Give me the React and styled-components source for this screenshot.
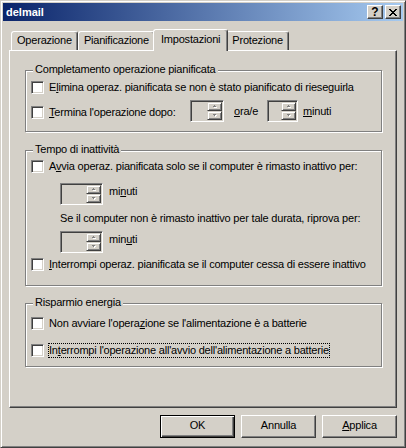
import React from "react";
import styled, { createGlobalStyle, css } from "styled-components";

const GlobalStyle = createGlobalStyle`
  html, body {
    margin: 0;
    padding: 0;
    background: #d4d0c8;
  }
  body {
    font-family: "Liberation Sans", Arial, sans-serif;
    font-size: 11px;
    line-height: 13px;
    letter-spacing: -0.2px;
    color: #000;
  }
  * {
    box-sizing: border-box;
  }
`;

const Window = styled.div`
  width: 406px;
  height: 448px;
  display: flex;
  flex-direction: column;
  padding: 2px;
  background: #d4d0c8;
  border: 1px solid;
  border-color: #d4d0c8 #404040 #404040 #d4d0c8;
  box-shadow: inset 1px 1px #fff, inset -1px -1px #808080;
`;

const TitleBar = styled.div`
  flex: none;
  height: 18px;
  display: flex;
  align-items: center;
  padding: 0 2px 0 3px;
  background: linear-gradient(to right, #0a246a, #a6caf0);
`;

const Title = styled.span`
  flex: 1;
  color: #fff;
  font-weight: bold;
  letter-spacing: 0;
`;

const CaptionButtons = styled.div`
  display: flex;
  gap: 2px;
`;

const CaptionButton = styled.div`
  width: 16px;
  height: 14px;
  display: flex;
  align-items: center;
  justify-content: center;
  background: #d4d0c8;
  border: 1px solid;
  border-color: #fff #404040 #404040 #fff;
  box-shadow: inset -1px -1px #808080;
  font-weight: bold;
  font-size: 12px;
  letter-spacing: 0;
  line-height: 12px;
`;

const Body = styled.div`
  flex: 1;
  display: flex;
  flex-direction: column;
  padding: 8px 6px 0;
`;

const TabStrip = styled.div`
  flex: none;
  height: 21px;
  display: flex;
  align-items: flex-end;
  padding-left: 2px;
  position: relative;
  z-index: 1;
`;

const Tab = styled.div`
  position: relative;
  height: 19px;
  padding: 2px 5px 0;
  background: #d4d0c8;
  border: 1px solid;
  border-bottom: none;
  border-color: #fff #404040 transparent #fff;
  border-radius: 3px 3px 0 0;
  box-shadow: inset -1px 0 #808080;
  white-space: nowrap;
  z-index: 1;

  ${({ $active }) => $active && css`
    height: 22px;
    margin: 0 -2px -1px;
    padding: 3px 7px 0;
    z-index: 2;
  `}
`;

const Panel = styled.div`
  flex: none;
  height: 358px;
  display: flex;
  flex-direction: column;
  padding: 19px 14px 0 15px;
  border: 1px solid;
  border-color: #fff #404040 #404040 #fff;
  box-shadow: inset -1px -1px #808080;
`;

const GroupBox = styled.div`
  position: relative;
  display: flex;
  flex-direction: column;
  margin-top: ${({ $mt }) => $mt || 0}px;
  padding: ${({ $pad }) => $pad};
  border: 1px solid #808080;
  box-shadow: 1px 1px 0 #fff, inset 1px 1px 0 #fff;
`;

const Legend = styled.span`
  position: absolute;
  top: -8px;
  left: 7px;
  padding: 0 2px;
  background: #d4d0c8;
  white-space: nowrap;
`;

const Row = styled.div`
  display: flex;
  align-items: ${({ $align }) => $align || "center"};
  margin-top: ${({ $mt }) => $mt || 0}px;
  padding-left: ${({ $indent }) => $indent || 0}px;
`;

const CheckOption = styled.div`
  flex: none;
  display: flex;
  align-items: center;
  gap: 4px;
  width: ${({ $w }) => ($w ? `${$w}px` : "auto")};
  margin-top: ${({ $mt }) => $mt || 0}px;
`;

const Check = styled.span`
  flex: none;
  width: 13px;
  height: 13px;
  background: #fff;
  border: 1px solid;
  border-color: #808080 #fff #fff #808080;
  box-shadow: inset 1px 1px #404040, inset -1px -1px #d4d0c8;
`;

const Caption = styled.span`
  margin: -1px 0;
  border: 1px dotted ${({ $focus }) => ($focus ? "#000" : "transparent")};
  white-space: nowrap;
`;

const Text = styled.span`
  flex: none;
  white-space: nowrap;
  width: ${({ $w }) => ($w ? `${$w}px` : "auto")};
  margin-left: ${({ $ml }) => $ml || 0}px;
  margin-top: ${({ $mt }) => $mt || 0}px;
`;

const Key = styled.u`
  text-decoration: underline;
  text-underline-offset: 1px;
`;

const Spinner = styled.div`
  flex: none;
  width: ${({ $w }) => $w}px;
  height: 22px;
  display: flex;
  justify-content: flex-end;
  padding: 1px;
  background: #d4d0c8;
  border: 1px solid;
  border-color: #808080 #fff #fff #808080;
  box-shadow: inset 1px 1px #404040, inset -1px -1px #d4d0c8;
`;

const SpinColumn = styled.div`
  width: 15px;
  display: flex;
  flex-direction: column;
`;

const SpinButton = styled.div`
  flex: 1;
  display: flex;
  align-items: center;
  justify-content: center;
  border: 1px solid;
  border-color: #d4d0c8 #404040 #404040 #d4d0c8;
  box-shadow: inset 1px 1px #fff, inset -1px -1px #808080;
`;

const ButtonBar = styled.div`
  display: flex;
  justify-content: flex-end;
  gap: 6px;
  margin-top: 7px;
`;

const Button = styled.button`
  width: 75px;
  height: 23px;
  padding: 0 0 2px;
  font: inherit;
  letter-spacing: inherit;
  color: #000;
  background: #d4d0c8;
  border: 1px solid;
  border-color: #fff #404040 #404040 #fff;
  box-shadow: inset -1px -1px #808080;

  ${({ $default }) => $default && css`
    border-color: #000;
    box-shadow: inset 1px 1px #fff, inset -1px -1px #404040, inset -2px -2px #808080;
  `}
`;

const CloseGlyph = () => (
  <svg width="8" height="7" viewBox="0 0 8 7" shapeRendering="crispEdges">
    <path
      fill="#000"
      d="M0 0h2v1H0zM6 0h2v1H6zM1 1h2v1H1zM5 1h2v1H5zM2 2h4v1H2zM3 3h2v1H3zM2 4h4v1H2zM1 5h2v1H1zM5 5h2v1H5zM0 6h2v1H0zM6 6h2v1H6z"
    />
  </svg>
);

const Arrow = ({ down }) => (
  <svg width="4" height="3" viewBox="0 0 4 3" shapeRendering="crispEdges">
    <path fill="#fff" d={down ? "M1 1h3v1H1zM2 2h1v1H2z" : "M2 1h1v1H2zM1 2h3v1H1z"} />
    <path fill="#808080" d={down ? "M0 0h3v1H0zM1 1h1v1H1z" : "M1 0h1v1H1zM0 1h3v1H0z"} />
  </svg>
);

const Spin = ({ w }) => (
  <Spinner $w={w}>
    <SpinColumn>
      <SpinButton><Arrow /></SpinButton>
      <SpinButton><Arrow down /></SpinButton>
    </SpinColumn>
  </Spinner>
);

const Option = ({ children, w, mt, focus }) => (
  <CheckOption $w={w} $mt={mt}>
    <Check />
    <Caption $focus={focus}>{children}</Caption>
  </CheckOption>
);

export default function App() {
  return (
    <>
      <GlobalStyle />
      <Window>
        <TitleBar>
          <Title>delmail</Title>
          <CaptionButtons>
            <CaptionButton>?</CaptionButton>
            <CaptionButton><CloseGlyph /></CaptionButton>
          </CaptionButtons>
        </TitleBar>

        <Body>
          <TabStrip>
            <Tab>Operazione</Tab>
            <Tab>Pianificazione</Tab>
            <Tab $active>Impostazioni</Tab>
            <Tab>Protezione</Tab>
          </TabStrip>

          <Panel>
            <GroupBox $pad="10px 5px 9px">
              <Legend>Completamento operazione pianificata</Legend>
              <Row>
                <Option>
                  E<Key>l</Key>imina operaz. pianificata se non è stato pianificato di rieseguirla
                </Option>
              </Row>
              <Row $mt={6}>
                <Option w={159} mt={3}>
                  <Key>T</Key>ermina l'operazione dopo:
                </Option>
                <Spin w={34} />
                <Text $ml={10} $w={33}><Key>o</Key>ra/e</Text>
                <Spin w={31} />
                <Text $ml={5}><Key>m</Key>inuti</Text>
              </Row>
            </GroupBox>

            <GroupBox $mt={18} $pad="9px 5px 14px">
              <Legend>Tempo di inattività</Legend>
              <Row>
                <Option>
                  A<Key>v</Key>via operaz. pianificata solo se il computer è rimasto inattivo per:
                </Option>
              </Row>
              <Row $mt={10} $indent={29} $align="flex-start">
                <Spin w={43} />
                <Text $ml={6} $mt={2}>mi<Key>n</Key>uti</Text>
              </Row>
              <Row $mt={7} $indent={29}>
                <Text>Se il computer non è rimasto inattivo per tale durata, riprova per:</Text>
              </Row>
              <Row $mt={6} $indent={29} $align="flex-start">
                <Spin w={43} />
                <Text $ml={6} $mt={2}>min<Key>u</Key>ti</Text>
              </Row>
              <Row $mt={5}>
                <Option>
                  <Key>I</Key>nterrompi operaz. pianificata se il computer cessa di essere inattivo
                </Option>
              </Row>
            </GroupBox>

            <GroupBox $mt={17} $pad="13px 5px 9px">
              <Legend>Risparmio energia</Legend>
              <Row>
                <Option>
                  Non avviare l'opera<Key>z</Key>ione se l'alimentazione è a batterie
                </Option>
              </Row>
              <Row $mt={14}>
                <Option focus>
                  In<Key>t</Key>errompi l'operazione all'avvio dell'alimentazione a batterie
                </Option>
              </Row>
            </GroupBox>
          </Panel>

          <ButtonBar>
            <Button $default>OK</Button>
            <Button>Annulla</Button>
            <Button><Key>A</Key>pplica</Button>
          </ButtonBar>
        </Body>
      </Window>
    </>
  );
}
